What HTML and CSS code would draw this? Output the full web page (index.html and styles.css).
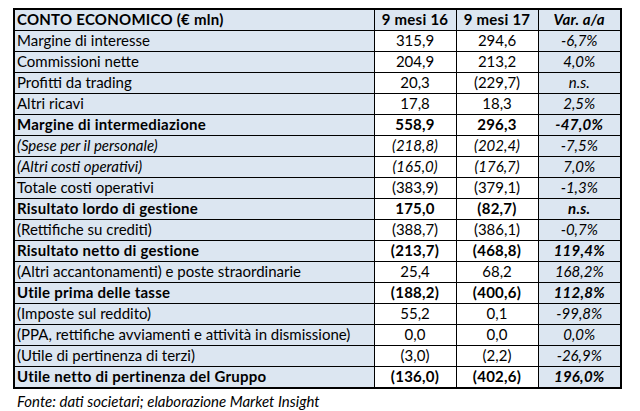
FILE: index.html
```html
<!DOCTYPE html>
<html lang="it">
<head>
<meta charset="utf-8">
<link rel="stylesheet" href="styles.css">
</head>
<body>
<div class="page">
<table class="ce">
<colgroup><col class="c-label"><col class="c-num"><col class="c-num"><col class="c-var"></colgroup>
<thead>
<tr class="bold head"><td class="lbl">CONTO ECONOMICO (€ mln)</td><td class="hnum">9 mesi 16</td><td class="hnum">9 mesi 17</td><td class="var">Var. a/a</td></tr>
</thead>
<tbody>
<tr><td class="lbl">Margine di interesse</td><td class="num">315,9</td><td class="num">294,6</td><td class="var">-6,7%</td></tr>
<tr><td class="lbl">Commissioni nette</td><td class="num">204,9</td><td class="num">213,2</td><td class="var">4,0%</td></tr>
<tr><td class="lbl">Profitti da trading</td><td class="num">20,3</td><td class="num">(229,7)</td><td class="var">n.s.</td></tr>
<tr><td class="lbl">Altri ricavi</td><td class="num">17,8</td><td class="num">18,3</td><td class="var">2,5%</td></tr>
<tr class="bold"><td class="lbl">Margine di intermediazione</td><td class="num">558,9</td><td class="num">296,3</td><td class="var">-47,0%</td></tr>
<tr class="ital"><td class="lbl">(Spese per il personale)</td><td class="num">(218,8)</td><td class="num">(202,4)</td><td class="var">-7,5%</td></tr>
<tr class="ital"><td class="lbl">(Altri costi operativi)</td><td class="num">(165,0)</td><td class="num">(176,7)</td><td class="var">7,0%</td></tr>
<tr><td class="lbl">Totale costi operativi</td><td class="num">(383,9)</td><td class="num">(379,1)</td><td class="var">-1,3%</td></tr>
<tr class="bold"><td class="lbl">Risultato lordo di gestione</td><td class="num">175,0</td><td class="num">(82,7)</td><td class="var">n.s.</td></tr>
<tr><td class="lbl">(Rettifiche su crediti)</td><td class="num">(388,7)</td><td class="num">(386,1)</td><td class="var">-0,7%</td></tr>
<tr class="bold"><td class="lbl">Risultato netto di gestione</td><td class="num">(213,7)</td><td class="num">(468,8)</td><td class="var">119,4%</td></tr>
<tr><td class="lbl">(Altri accantonamenti) e poste straordinarie</td><td class="num">25,4</td><td class="num">68,2</td><td class="var">168,2%</td></tr>
<tr class="bold"><td class="lbl">Utile prima delle tasse</td><td class="num">(188,2)</td><td class="num">(400,6)</td><td class="var">112,8%</td></tr>
<tr><td class="lbl">(Imposte sul reddito)</td><td class="num">55,2</td><td class="num">0,1</td><td class="var">-99,8%</td></tr>
<tr><td class="lbl">(PPA, rettifiche avviamenti e attività in dismissione)</td><td class="num">0,0</td><td class="num">0,0</td><td class="var">0,0%</td></tr>
<tr><td class="lbl">(Utile di pertinenza di terzi)</td><td class="num">(3,0)</td><td class="num">(2,2)</td><td class="var">-26,9%</td></tr>
<tr class="bold"><td class="lbl">Utile netto di pertinenza del Gruppo</td><td class="num">(136,0)</td><td class="num">(402,6)</td><td class="var">196,0%</td></tr>
</tbody>
</table>
<p class="source">Fonte: dati societari; elaborazione Market Insight</p>
</div>
</body>
</html>
```
FILE: styles.css
```css
html, body {
  margin: 0;
  padding: 0;
  background: #ffffff;
}
.page {
  padding: 8px 0 0 13px;
  font-family: Lato, "Open Sans", sans-serif;
  color: #000;
}
.ce {
  border-collapse: collapse;
  border: 2px solid #000;
  table-layout: fixed;
  width: 607px;
  font-size: 15px;
}
.c-label { width: 360px; }
.c-num { width: 82px; }
.c-var { width: 83px; }
.ce td {
  border: 1px solid #000;
  height: 21px;
  padding: 0 0 2px 0;
  box-sizing: border-box;
  vertical-align: bottom;
  line-height: 18px;
  white-space: nowrap;
}
.ce td.lbl {
  background: #dce6f1;
  padding-left: 2px;
  text-align: left;
}
.ce td.num, .ce td.hnum {
  text-align: center;
  background: #ffffff;
}
.ce .head td { background: #dce6f1; }
.ce td.var {
  background: #dce6f1;
  text-align: center;
  font-style: italic;
}
.bold td {
  font-weight: 700;
  letter-spacing: 0.25px;
}
.ital td { font-style: italic; }
.source {
  margin: 3px 0 0 4px;
  font-style: italic;
  font-size: 15px;
}
```
